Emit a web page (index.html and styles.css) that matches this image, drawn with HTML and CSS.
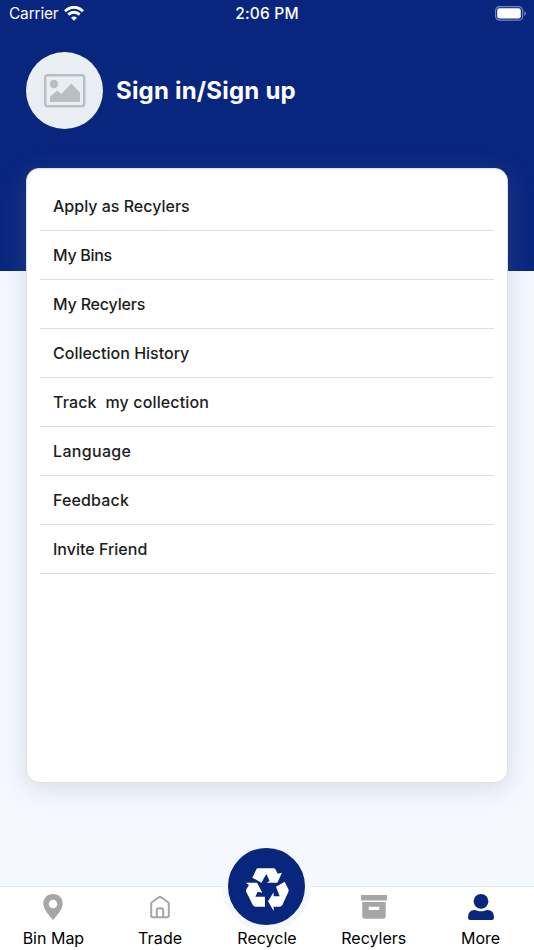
FILE: index.html
```html
<!DOCTYPE html>
<html lang="en">
<head>
<meta charset="utf-8">
<title>More</title>
<link rel="stylesheet" href="styles.css">
</head>
<body>
<div class="screen">
  <header class="hero">
    <div class="status">
      <div class="carrier"><span>Carrier</span>
        <svg class="wifi" viewBox="0 0 20 15"><g fill="none" stroke="#fff" stroke-width="2.9"><path d="M1 5.2C6-.1 14-.1 19 5.2"/><path d="M4.300 8.600C7.500 5.400 12.500 5.400 15.700 8.600"/></g><path fill="#fff" d="M10 14.800 7 11.800Q10 9.100 13 11.800Z"/></svg>
      </div>
      <span class="time">2:06 PM</span>
      <svg class="battery" viewBox="0 0 32 15"><rect x=".6" y=".6" width="27" height="13.600" rx="4" fill="none" stroke="#fff" stroke-opacity=".45" stroke-width="1.200"/><rect x="2.200" y="2.200" width="23.600" height="10.300" rx="2.300" fill="#fff"/><path d="M29.300 5v5c2-.8 2-4.200 0-5Z" fill="#fff" fill-opacity=".45"/></svg>
    </div>
    <div class="profile">
      <div class="avatar">
        <svg viewBox="0 0 42 34"><rect x="1.200" y="1.200" width="39" height="31" rx="2.500" fill="none" stroke="#b9bfc1" stroke-width="2.400"/><circle cx="10" cy="10" r="4.200" fill="#b9bfc1"/><path fill="#b9bfc1" d="M6 28v-5.500l7.500-6 3.800 3.500L27.300 9.500 36 18.500V28Z"/></svg>
      </div>
      <h1>Sign in/Sign up</h1>
    </div>
  </header>
  <main class="card">
    <ul>
      <li>Apply as Recylers</li>
      <li class="tight">My Bins</li>
      <li class="snug">My Recylers</li>
      <li>Collection History</li>
      <li class="loose">Track&nbsp; my collection</li>
      <li class="wide">Language</li>
      <li class="loose">Feedback</li>
      <li>Invite Friend</li>
    </ul>
  </main>
  <nav class="tabs">
    <div class="tab">
      <svg viewBox="0 0 28 28"><path fill="#a6a6a6" fill-rule="evenodd" d="M14 1C8.300 1 4.300 5.200 4.300 10.600 4.300 16.500 10 22.500 14 27c4-4.500 9.700-10.500 9.700-16.400C23.700 5.200 19.700 1 14 1Zm0 5.700a4.300 4.300 0 1 1 0 8.600 4.300 4.300 0 0 1 0-8.600Z"/></svg>
      <span>Bin Map</span>
    </div>
    <div class="tab">
      <svg viewBox="0 0 28 28"><g fill="none" stroke="#a6a6a6" stroke-width="2" stroke-linejoin="round"><path d="M5.200 10.800Q5.200 9.800 6 9.200L12.800 4.300Q14 3.400 15.200 4.300L22 9.200Q22.800 9.800 22.800 10.800V22.500Q22.800 24.200 21.100 24.200H6.900Q5.200 24.200 5.200 22.500Z"/><path d="M10.800 24V17.500Q10.800 15.200 13 15.200H15Q17.200 15.200 17.200 17.500V24"/></g></svg>
      <span class="loose">Trade</span>
    </div>
    <div class="tab">
      <div class="recycle">
        <svg viewBox="0 0 186 186"><g fill="#fff"><path d="M65 37H112Q117 37 119 41L125 53 138 50 124 80H92L101 75 91 54 76 80 49 65 60 42Q62 37 65 37Z"/><path d="M29 80H63L79 110 65 107 58 122H87V152H60Q53 152 50 146L31 108Q29 104 31 100L39 87Z"/><path d="M120 92 146 77 157 99Q159 104 157 108L139 147Q136 152 131 152H113V165L96 136 113 109V121H131Z"/></g></svg>
      </div>
      <span>Recycle</span>
    </div>
    <div class="tab">
      <svg viewBox="0 0 28 28"><path fill="#a6a6a6" fill-rule="evenodd" d="M1 2H27V7.500H1ZM2.300 9H25.700V23Q25.700 25.700 23 25.700H5Q2.300 25.700 2.300 23ZM8.700 13.800V17H19.300V13.800Z"/></svg>
      <span>Recylers</span>
    </div>
    <div class="tab">
      <svg viewBox="0 0 28 28" fill="#09267f"><circle cx="14" cy="8.300" r="7.400"/><path d="M1 24.500Q1 17 7.500 17 9 17 10.400 17.700 14 19 17.600 17.700 19 17 20.500 17 27 17 27 24.500 27 27 24.500 27H3.500Q1 27 1 24.500Z"/></svg>
      <span>More</span>
    </div>
  </nav>
</div>
</body>
</html>
```

FILE: styles.css
```css
* { box-sizing: border-box; }
body { margin: 0; font-family: Inter, "Liberation Sans", sans-serif; }
.screen { width: 534px; height: 950px; display: flex; flex-direction: column; background: #f5f8ff; overflow: hidden; }
.hero { height: 271px; flex: none; background: #09267f; color: #fff; }
.status { height: 27px; display: grid; grid-template-columns: 1fr auto 1fr; align-items: center; padding: 0 7px 0 9px; font-size: 15.500px; }
.carrier { display: flex; align-items: center; gap: 6px; letter-spacing: -.2px; }
.wifi { width: 20px; height: 15px; margin-top: -1px; }
.time { font-weight: 500; letter-spacing: .2px; margin-left: -2px; }
.battery { width: 32px; height: 15px; justify-self: end; }
.profile { display: flex; align-items: center; gap: 13px; margin: 25px 0 0 26px; }
.avatar { width: 77px; height: 77px; border-radius: 50%; background: #e8eef1; display: flex; align-items: center; justify-content: center; }
.avatar svg { width: 42px; height: 34px; }
h1 { margin: 0; font-size: 24px; line-height: 36px; font-weight: 700; letter-spacing: .2px; white-space: nowrap; }
.card { width: 482px; height: 615px; flex: none; margin: -103px auto 0; padding: 13px; background: #fff; border: 1px solid #dbe2e6; border-radius: 13px; box-shadow: 0 5px 26px rgba(120, 130, 140, .24); }
ul { margin: 0; padding: 0; list-style: none; }
li { height: 49px; padding: 0 13px; border-bottom: 1px solid #d8e0e3; display: flex; align-items: center; font-size: 16px; font-weight: 500; color: #1d1d1d; white-space: nowrap; }
.tight { letter-spacing: -.3px; }
.snug { letter-spacing: -.18px; }
.loose { letter-spacing: .14px; }
.wide { letter-spacing: .33px; }
.tabs { height: 64px; margin-top: auto; flex: none; display: grid; grid-template-columns: repeat(5, 1fr); background: #fff; border-top: 1px solid #e4e6ed; }
.tab { display: flex; flex-direction: column; align-items: center; padding-top: 6px; font-size: 16px; line-height: 24px; white-space: nowrap; color: #000; }
.tab > svg { width: 28px; height: 28px; margin-bottom: 5px; }
.tab span { position: relative; }
.recycle { width: 89px; height: 89px; flex: none; margin: -51px 0 -5px; border: 6px solid #f5f8ff; border-radius: 50%; background: #09267f; display: flex; align-items: center; justify-content: center; }
.recycle svg { width: 62px; height: 62px; flex: none; }
```
